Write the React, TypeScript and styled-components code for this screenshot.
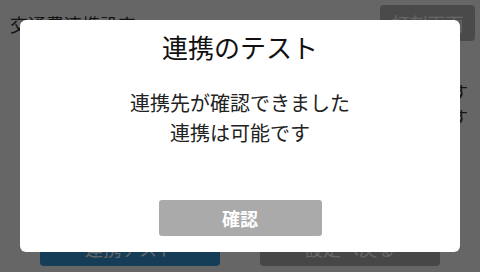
import * as React from "react";
import styled, { createGlobalStyle } from "styled-components";

const GlobalStyle = createGlobalStyle`
  html, body {
    margin: 0;
    padding: 0;
    background: #fff;
  }
  body {
    font-family: "Noto Sans CJK JP", "Noto Sans", sans-serif;
  }
`;

const App = () => {
  return (
    <>
      <GlobalStyle />
      <Page>
        <Header>
          <PageTitle>交通費連携設定</PageTitle>
          <TopButton>打刻画面</TopButton>
        </Header>
        <Body>
          <Note>します</Note>
          <Note>できます</Note>
        </Body>
        <Footer>
          <ActionButton $color="#3799dc">連携テスト</ActionButton>
          <ActionButton $color="#b2b2b2">設定へ戻る</ActionButton>
        </Footer>
      </Page>

      <Overlay>
        <Dialog>
          <DialogTitle>連携のテスト</DialogTitle>
          <Message>
            連携先が確認できました
            <br />
            連携は可能です
          </Message>
          <ConfirmButton>確認</ConfirmButton>
        </Dialog>
      </Overlay>
    </>
  );
};

export default App;

const Page = styled.div`
  width: 480px;
  height: 272px;
  display: flex;
  flex-direction: column;
  box-sizing: border-box;
  overflow: hidden;
`;

const Header = styled.div`
  display: flex;
  justify-content: space-between;
  align-items: flex-start;
  padding: 5px 5px 0 10px;
`;

const PageTitle = styled.h1`
  margin: 6px 0 0;
  font-size: 18px;
  font-weight: 400;
  line-height: 26px;
  color: #333;
`;

const TopButton = styled.button`
  width: 95px;
  height: 36px;
  border: none;
  border-radius: 4px;
  background: #bababa;
  color: #fff;
  font-family: inherit;
  font-size: 18px;
  padding: 0;
`;

const Body = styled.div`
  flex: 1;
  padding: 38px 12px 0;
  display: flex;
  flex-direction: column;
  align-items: flex-end;
`;

const Note = styled.p`
  margin: 0;
  font-size: 16px;
  line-height: 25px;
  color: #333;
`;

const Footer = styled.div`
  display: flex;
  justify-content: center;
  gap: 40px;
  padding-bottom: 6px;
`;

const ActionButton = styled.button<{ $color: string }>`
  width: 180px;
  height: 36px;
  border: none;
  border-radius: 4px;
  background: ${(p) => p.$color};
  color: #fff;
  font-family: inherit;
  font-size: 18px;
  padding: 0;
`;

const Overlay = styled.div`
  position: fixed;
  inset: 0;
  background: rgba(0, 0, 0, 0.6);
  display: flex;
  align-items: center;
  justify-content: center;
`;

const Dialog = styled.div`
  width: 440px;
  height: 232px;
  box-sizing: border-box;
  background: #fff;
  border-radius: 6px;
  display: flex;
  flex-direction: column;
  align-items: center;
  padding: 9px 0 16px;
`;

const DialogTitle = styled.h2`
  margin: 0;
  font-size: 26px;
  font-weight: 400;
  line-height: 36px;
  color: #111;
`;

const Message = styled.p`
  margin: 23px 0 0;
  font-size: 20px;
  line-height: 30px;
  color: #222;
  text-align: center;
`;

const ConfirmButton = styled.button`
  margin-top: auto;
  width: 163px;
  height: 36px;
  border: none;
  border-radius: 3px;
  background: #aaa;
  color: #fff;
  font-family: inherit;
  font-size: 18px;
  font-weight: 700;
  padding: 0;
`;
